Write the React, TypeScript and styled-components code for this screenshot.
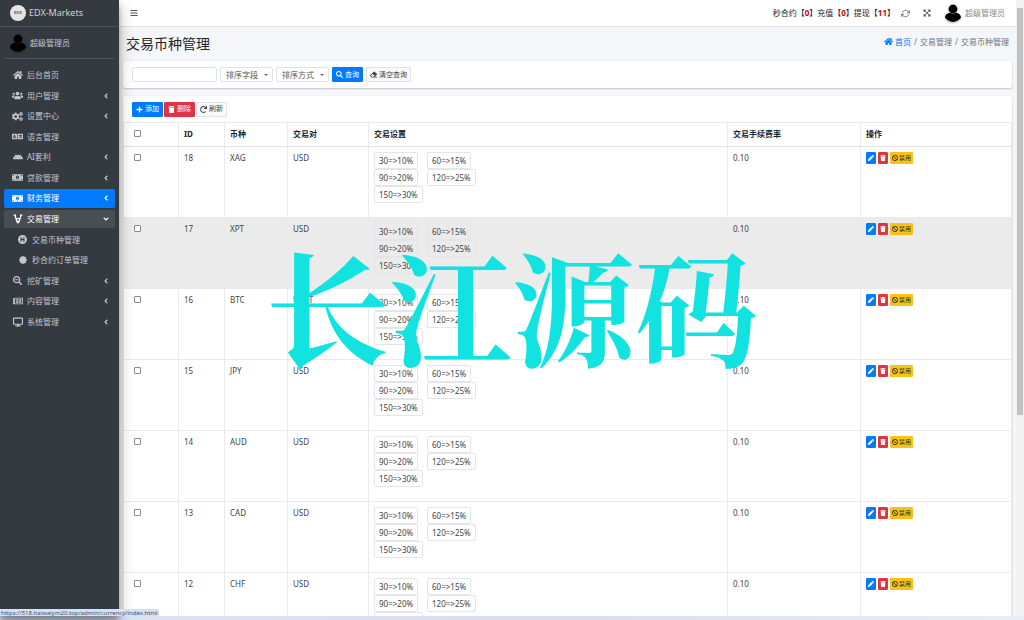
import React from 'react';
import styled, { createGlobalStyle, css } from 'styled-components';
import type { IconType } from 'react-icons';
import {
  FaAndroid, FaAngleDown, FaAngleLeft, FaBan, FaBars, FaCertificate, FaCogs, FaDesktop,
  FaEraser, FaExpandArrowsAlt, FaHome, FaHospitalSymbol, FaLanguage, FaMoneyBillAlt,
  FaPen, FaPlus, FaRedo, FaRegNewspaper, FaSearch, FaSearchMinus, FaTrash, FaUsers,
} from 'react-icons/fa';
import { FiRefreshCw } from 'react-icons/fi';

const Global = createGlobalStyle`
  * { box-sizing: border-box; }
  html, body, #root { height: 100%; }
  body {
    margin: 0;
    overflow: hidden;
    background: #f4f6f9;
    color: #212529;
    font: 8px/12px "Noto Sans", "Noto Sans CJK SC", sans-serif;
  }
  button, input, select { font: inherit; color: inherit; }
  button { cursor: pointer; }
  ul, ol { list-style: none; margin: 0; padding: 0; }
  svg { flex: none; }
`;

const Screen = styled.div`
  position: relative;
  height: 100vh;
  display: flex;
  flex-direction: column;
`;

const Shell = styled.div`
  flex: 1;
  min-height: 0;
  display: flex;
`;

const Sidebar = styled.aside`
  position: relative;
  z-index: 2;
  flex: none;
  width: 119px;
  background: #343a40;
  color: #c2c7d0;
  box-shadow: 0 7px 14px rgba(0, 0, 0, 0.3), 0 5px 5px rgba(0, 0, 0, 0.22);
`;

const Brand = styled.a`
  display: flex;
  align-items: center;
  gap: 3px;
  height: 27px;
  padding-left: 10px;
  border-bottom: 1px solid #4b545c;
  color: #d0d2d4;
  font-size: 9px;
  text-decoration: none;
`;

const BrandLogo = styled.span`
  display: grid;
  place-items: center;
  width: 16px;
  height: 16px;
  border-radius: 50%;
  background: #e4e5e6;
  color: #555;
  font-size: 4px;
  font-weight: 700;
  line-height: 4px;
`;

const UserPanel = styled.div`
  display: flex;
  align-items: center;
  gap: 3px;
  height: 32px;
  margin: 0 5px;
  padding-left: 4px;
  border-bottom: 1px solid #4f5962;
`;

const Menu = styled.ul`
  display: grid;
  grid-auto-rows: 1fr;
  row-gap: 2px;
  min-height: 265px;
  margin: 7px 4px 0;
`;

const MenuEntry = styled.li<{ $span?: number }>`
  display: grid;
  grid-row: span ${(p) => p.$span ?? 1};
  grid-auto-rows: 1fr;
  row-gap: 2px;
`;

const SubMenu = styled.ul`
  display: grid;
  grid-row: span 2;
  grid-auto-rows: 1fr;
  row-gap: 2px;
`;

type Tone = 'active' | 'open';

const MenuLink = styled.a<{ $tone?: Tone; $nested?: boolean }>`
  display: flex;
  align-items: center;
  gap: 4px;
  height: 100%;
  padding: 0 5px 0 ${(p) => (p.$nested ? 13 : 8)}px;
  border-radius: 2px;
  color: #c2c7d0;
  text-decoration: none;
  ${(p) => p.$tone === 'active' && css`background: #007bff; color: #fff;`}
  ${(p) => p.$tone === 'open' && css`background: #494e53; color: #fff;`}
`;

const MenuIcon = styled.span`
  display: grid;
  place-items: center;
  width: 11px;
`;

const MenuText = styled.span`
  flex: 1;
  white-space: nowrap;
`;

const Main = styled.div`
  flex: 1;
  min-width: 0;
  display: flex;
  flex-direction: column;
  overflow: hidden;
`;

const Navbar = styled.header`
  flex: none;
  display: flex;
  align-items: center;
  height: 27px;
  padding: 0 11px 0 10px;
  border-bottom: 1px solid #dee2e6;
  background: #fff;
`;

const IconButton = styled.button`
  display: grid;
  place-items: center;
  width: 10px;
  height: 12px;
  padding: 0;
  border: 0;
  background: none;
  color: #555;
`;

const Notices = styled.div`
  margin-left: auto;
  white-space: nowrap;

  b { color: #c00; }
`;

const NavTools = styled.div`
  display: flex;
  align-items: center;
  gap: 12px;
  margin-left: 5px;
`;

const Account = styled.a`
  display: flex;
  align-items: center;
  gap: 3px;
  margin-left: 12px;
  color: #8a8a8a;
  text-decoration: none;
  white-space: nowrap;
`;

const Avatar = styled.svg`
  width: 18px;
  height: 18px;
  border-radius: 50%;
  filter: drop-shadow(0 1px 1px rgba(0, 0, 0, 0.35));
`;

const PageHead = styled.div`
  flex: none;
  display: flex;
  align-items: center;
  justify-content: space-between;
  height: 34px;
  padding: 0 7px;
`;

const Title = styled.h1`
  margin: 0;
  font-size: 14px;
  font-weight: 400;
  line-height: 20px;
`;

const Crumbs = styled.ol`
  display: flex;
  gap: 3px;
  margin-bottom: 5px;
  color: #6c757d;

  a {
    display: flex;
    align-items: center;
    gap: 2px;
    color: #007bff;
    text-decoration: none;
  }
`;

const Content = styled.main`
  flex: 1;
  min-height: 0;
  display: flex;
  flex-direction: column;
  gap: 8px;
  padding: 0 4px;
`;

const Card = styled.section`
  flex: none;
  border-radius: 2px;
  background: #fff;
  box-shadow: 0 0 1px rgba(0, 0, 0, 0.13), 0 1px 2px rgba(0, 0, 0, 0.2);
`;

const SearchForm = styled.form`
  display: flex;
  align-items: center;
  gap: 3px;
  height: 27px;
  padding: 0 9px;
`;

const field = css`
  height: 15px;
  border: 1px solid #dfe3e6;
  border-radius: 2px;
  background: #fff;
`;

const TextField = styled.input`
  ${field}
  width: 85px;
  padding: 0 4px;
`;

const SelectBox = styled.span`
  position: relative;
  display: flex;

  &::after {
    content: '';
    position: absolute;
    right: 5px;
    top: 7px;
    border: 2px solid transparent;
    border-top-color: #666;
  }
`;

const SelectField = styled.select`
  ${field}
  width: 53px;
  padding: 0 5px;
  appearance: none;
  color: #555;
`;

type Kind = 'primary' | 'danger' | 'plain' | 'warning';

const kinds: Record<Kind, [string, string, string]> = {
  primary: ['#007bff', '#007bff', '#fff'],
  danger: ['#dc3545', '#dc3545', '#fff'],
  plain: ['#f8f9fa', '#e3e3e3', '#444'],
  warning: ['#fbc117', '#fbc117', '#1f2d3d'],
};

const Button = styled.button<{ $kind: Kind; $small?: boolean }>`
  display: inline-flex;
  align-items: center;
  justify-content: center;
  gap: ${(p) => (p.$small ? 1 : 2)}px;
  height: ${(p) => (p.$small ? 12 : 15)}px;
  padding: 0 ${(p) => (p.$small ? 1 : 3)}px;
  min-width: 10px;
  border: 1px solid ${(p) => kinds[p.$kind][1]};
  border-radius: 1px;
  background: ${(p) => kinds[p.$kind][0]};
  color: ${(p) => kinds[p.$kind][2]};
  font-size: ${(p) => (p.$small ? 6 : 7)}px;
  line-height: 10px;
  white-space: nowrap;
`;

const Toolbar = styled.div`
  display: flex;
  align-items: center;
  gap: 1px;
  height: 26px;
  padding: 0 9px;
`;

const Table = styled.table`
  width: 100%;
  table-layout: fixed;
  border-collapse: separate;
  border-spacing: 0;
  border-left: 1px solid #eaecef;

  th, td {
    padding: 5px;
    border-right: 1px solid #e8eaed;
    border-top: 1px solid #e8eaed;
    text-align: left;
    vertical-align: top;
  }

  th {
    height: 25px;
    border-bottom: 1px solid #dee2e6;
  }

  td { height: 71px; color: #444; }
  tbody tr:first-child td { height: 70px; border-top: 0; }
`;

const Row = styled.tr<{ $hover: boolean }>`
  background: ${(p) => (p.$hover ? '#ebebeb' : '#fff')};
`;

const Col = styled.col<{ $w?: number }>`
  width: ${(p) => (p.$w ? `${p.$w}px` : 'auto')};
`;

const Tick = styled.input`
  display: block;
  width: 7px;
  height: 7px;
  margin: 2px 0 0 5px;
  appearance: none;
  border: 1px solid #8a8a8a;
  border-radius: 1px;
  background: #fff;

  &:checked { background: #007bff; }
`;

const Rates = styled.div`
  display: grid;
  grid-template-columns: 53px auto;
  justify-content: start;
  justify-items: start;
`;

const Rate = styled.span`
  height: 17px;
  padding: 1px 4px;
  border: 1px solid #e3e5e8;
  border-radius: 2px;
  line-height: 14px;
  color: #444;
`;

const Actions = styled.div`
  display: flex;
  gap: 2px;
`;

const Scrollbar = styled.div`
  flex: none;
  width: 8px;
  padding: 8px 1px 0;
  background: #f1f1f3;
`;

const Thumb = styled.div`
  height: 67%;
  background: #c1c1c1;
`;

const BottomStrip = styled.div`
  flex: none;
  height: 4px;
  background: linear-gradient(90deg, #dce4f6, #dcdcf2 55%, #e8edf6);
`;

const LinkHint = styled.div`
  position: absolute;
  z-index: 3;
  left: 0;
  bottom: 4px;
  height: 7px;
  padding: 0 1px;
  overflow: hidden;
  border-radius: 0 2px 0 0;
  background: #d3e0f6;
  color: #465064;
  font-size: 6px;
  line-height: 9px;
  white-space: nowrap;
`;

const Watermark = styled.div`
  position: absolute;
  z-index: 4;
  inset: 0 0 14px;
  display: grid;
  place-items: center;
  color: #12e2e0;
  font: 700 123px/123px "Noto Serif CJK SC", "Noto Sans CJK SC", serif;
  white-space: nowrap;
  pointer-events: none;
`;

const Person = () => (
  <Avatar viewBox="0 0 18 18" aria-hidden="true">
    <circle cx="9" cy="5" r="4.4" />
    <path d="M1 13.5C1.500 10 4 9 6 8.700L9 10l3-1.300c2 .3 4.500 1.300 5 4.800C16 16.500 12.500 18 9 18S2 16.500 1 13.500z" />
  </Avatar>
);

/* Forked mark with a crossbar, used for the trading menu */
const TradeIcon = () => (
  <svg width="10" height="10" viewBox="0 0 10 10" fill="none" stroke="currentColor" aria-hidden="true">
    <path d="M1.800 1L4.300 8.500M8.200 1L5.700 8.500M3.200 4.700h3.600M5 7v2.500" strokeWidth="1.300" />
    <path d="M.7 1.200h2.300M7 1.200h2.300" strokeWidth="1.200" />
  </svg>
);

interface Item {
  text: string;
  icon: IconType | (() => React.ReactElement);
  size?: number;
  leaf?: boolean;
  tone?: Tone;
  children?: Item[];
}

const menu: Item[] = [
  { text: '后台首页', icon: FaHome, size: 10, leaf: true },
  { text: '用户管理', icon: FaUsers, size: 11 },
  { text: '设置中心', icon: FaCogs, size: 11 },
  { text: '语言管理', icon: FaLanguage, size: 11, leaf: true },
  { text: 'AI套利', icon: FaAndroid, size: 10 },
  { text: '贷款管理', icon: FaMoneyBillAlt, size: 11 },
  { text: '财务管理', icon: FaMoneyBillAlt, size: 11, tone: 'active' },
  {
    text: '交易管理',
    icon: TradeIcon,
    tone: 'open',
    children: [
      { text: '交易币种管理', icon: FaHospitalSymbol, size: 9, leaf: true },
      { text: '秒合约订单管理', icon: FaCertificate, size: 8, leaf: true },
    ],
  },
  { text: '挖矿管理', icon: FaSearchMinus, size: 9 },
  { text: '内容管理', icon: FaRegNewspaper, size: 10 },
  { text: '系统管理', icon: FaDesktop, size: 10 },
];

const MenuItem = ({ item, nested }: { item: Item; nested?: boolean }) => {
  const Icon = item.icon as IconType;
  return (
    <MenuEntry $span={item.children ? item.children.length + 1 : 1}>
      <MenuLink href="#" $tone={item.tone} $nested={nested}>
        <MenuIcon><Icon size={item.size} /></MenuIcon>
        <MenuText>{item.text}</MenuText>
        {!item.leaf && (item.children ? <FaAngleDown size={8} /> : <FaAngleLeft size={8} />)}
      </MenuLink>
      {item.children && (
        <SubMenu>
          {item.children.map((c) => <MenuItem key={c.text} item={c} nested />)}
        </SubMenu>
      )}
    </MenuEntry>
  );
};

const rows: [number, string, string][] = [
  [18, 'XAG', 'USD'],
  [17, 'XPT', 'USD'],
  [16, 'BTC', 'USDT'],
  [15, 'JPY', 'USD'],
  [14, 'AUD', 'USD'],
  [13, 'CAD', 'USD'],
  [12, 'CHF', 'USD'],
];

const rates = ['30=>10%', '60=>15%', '90=>20%', '120=>25%', '150=>30%'];

export default function App() {
  return (
    <Screen>
      <Global />
      <Shell>
        <Sidebar>
          <Brand href="#"><BrandLogo>EDX</BrandLogo>EDX-Markets</Brand>
          <UserPanel><Person />超级管理员</UserPanel>
          <nav>
            <Menu>
              {menu.map((item) => <MenuItem key={item.text} item={item} />)}
            </Menu>
          </nav>
        </Sidebar>
        <Main>
          <Navbar>
            <IconButton aria-label="菜单"><FaBars size={8} /></IconButton>
            <Notices>
              秒合约【<b>0</b>】充值【<b>0</b>】提现【<b>11</b>】
            </Notices>
            <NavTools>
              <IconButton aria-label="刷新页面"><FiRefreshCw size={9} /></IconButton>
              <IconButton aria-label="全屏"><FaExpandArrowsAlt size={8} /></IconButton>
            </NavTools>
            <Account href="#"><Person />超级管理员</Account>
          </Navbar>
          <PageHead>
            <Title>交易币种管理</Title>
            <Crumbs>
              <li><a href="#"><FaHome size={9} />首页</a></li>
              <li>/</li>
              <li>交易管理</li>
              <li>/</li>
              <li>交易币种管理</li>
            </Crumbs>
          </PageHead>
          <Content>
            <Card>
              <SearchForm onSubmit={(e) => e.preventDefault()}>
                <TextField type="text" aria-label="关键词" />
                <SelectBox>
                  <SelectField aria-label="排序字段"><option>排序字段</option></SelectField>
                </SelectBox>
                <SelectBox>
                  <SelectField aria-label="排序方式"><option>排序方式</option></SelectField>
                </SelectBox>
                <Button $kind="primary" type="submit"><FaSearch size={7} />查询</Button>
                <Button $kind="plain" type="reset"><FaEraser size={7} />清空查询</Button>
              </SearchForm>
            </Card>
            <Card>
              <Toolbar>
                <Button $kind="primary"><FaPlus size={7} />添加</Button>
                <Button $kind="danger"><FaTrash size={7} />删除</Button>
                <Button $kind="plain"><FaRedo size={7} />刷新</Button>
              </Toolbar>
              <Table>
                <colgroup>
                  <Col $w={55} /><Col $w={46} /><Col $w={63} /><Col $w={81} />
                  <Col /><Col $w={133} /><Col $w={151} />
                </colgroup>
                <thead>
                  <tr>
                    <th><Tick type="checkbox" aria-label="全选" /></th>
                    <th>ID</th>
                    <th>币种</th>
                    <th>交易对</th>
                    <th>交易设置</th>
                    <th>交易手续费率</th>
                    <th>操作</th>
                  </tr>
                </thead>
                <tbody>
                  {rows.map(([id, coin, pair]) => (
                    <Row key={id} $hover={id === 17}>
                      <td><Tick type="checkbox" aria-label={`选择 ${id}`} /></td>
                      <td>{id}</td>
                      <td>{coin}</td>
                      <td>{pair}</td>
                      <td>
                        <Rates>{rates.map((r) => <Rate key={r}>{r}</Rate>)}</Rates>
                      </td>
                      <td>0.10</td>
                      <td>
                        <Actions>
                          <Button $kind="primary" $small aria-label="编辑"><FaPen size={6} /></Button>
                          <Button $kind="danger" $small aria-label="删除"><FaTrash size={6} /></Button>
                          <Button $kind="warning" $small><FaBan size={6} />禁用</Button>
                        </Actions>
                      </td>
                    </Row>
                  ))}
                </tbody>
              </Table>
            </Card>
          </Content>
        </Main>
        <Scrollbar><Thumb /></Scrollbar>
      </Shell>
      <BottomStrip />
      <LinkHint>https://518.haiwaiym20.top/admin/currency/index.html</LinkHint>
      <Watermark>长江源码</Watermark>
    </Screen>
  );
}
